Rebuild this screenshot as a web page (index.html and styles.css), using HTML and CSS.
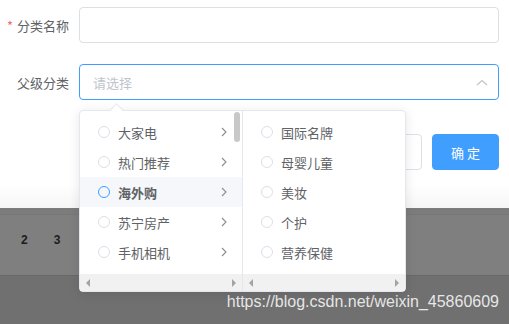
FILE: index.html
```html
<!DOCTYPE html>
<html lang="zh-CN">
<head>
    <meta charset="UTF-8">
    <title>添加分类</title>
    <link rel="stylesheet" href="styles.css">
</head>
<body>
    <div class="dialog">
        <div class="form">
            <div class="form-item">
                <label class="label required">分类名称</label>
                <div class="input"></div>
            </div>
            <div class="form-item">
                <label class="label">父级分类</label>
                <div class="input select is-focus">
                    <span class="placeholder">请选择</span>
                    <svg class="select-arrow" width="12" height="7" viewBox="0 0 12 7">
                        <polyline points="1,6 6,1.5 11,6" fill="none" stroke="#c0c4cc" stroke-width="1.2"/>
                    </svg>
                </div>
            </div>
        </div>
        <div class="footer">
            <button class="btn">取 消</button>
            <button class="btn btn-primary">确 定</button>
        </div>
    </div>

    <!-- 遮罩下面的页面 -->
    <div class="mask">
        <div class="pager">
            <span>2</span>
            <span>3</span>
        </div>
    </div>
    <div class="bottom">
        <span class="watermark">https://blog.csdn.net/weixin_45860609</span>
    </div>

    <!-- 级联选择下拉 -->
    <div class="cascader">
        <div class="cascader-arrow"></div>
        <div class="menu">
            <ul class="menu-list">
                <li class="node"><span class="radio"></span><span class="node-label">大家电</span><svg class="chevron" width="6" height="10" viewBox="0 0 6 10"><polyline points="1,1 5,5 1,9" fill="none" stroke="#8a8c92" stroke-width="1.1"/></svg></li>
                <li class="node"><span class="radio"></span><span class="node-label">热门推荐</span><svg class="chevron" width="6" height="10" viewBox="0 0 6 10"><polyline points="1,1 5,5 1,9" fill="none" stroke="#8a8c92" stroke-width="1.1"/></svg></li>
                <li class="node is-hover"><span class="radio"></span><span class="node-label">海外购</span><svg class="chevron" width="6" height="10" viewBox="0 0 6 10"><polyline points="1,1 5,5 1,9" fill="none" stroke="#8a8c92" stroke-width="1.1"/></svg></li>
                <li class="node"><span class="radio"></span><span class="node-label">苏宁房产</span><svg class="chevron" width="6" height="10" viewBox="0 0 6 10"><polyline points="1,1 5,5 1,9" fill="none" stroke="#8a8c92" stroke-width="1.1"/></svg></li>
                <li class="node"><span class="radio"></span><span class="node-label">手机相机</span><svg class="chevron" width="6" height="10" viewBox="0 0 6 10"><polyline points="1,1 5,5 1,9" fill="none" stroke="#8a8c92" stroke-width="1.1"/></svg></li>
            </ul>
            <div class="thumb"></div>
            <div class="hbar"><span class="tri tri-left"></span><span class="tri tri-right"></span></div>
        </div>
        <div class="menu">
            <ul class="menu-list">
                <li class="node"><span class="radio"></span><span class="node-label">国际名牌</span></li>
                <li class="node"><span class="radio"></span><span class="node-label">母婴儿童</span></li>
                <li class="node"><span class="radio"></span><span class="node-label">美妆</span></li>
                <li class="node"><span class="radio"></span><span class="node-label">个护</span></li>
                <li class="node"><span class="radio"></span><span class="node-label">营养保健</span></li>
            </ul>
            <div class="hbar"><span class="tri tri-left"></span><span class="tri tri-right"></span></div>
        </div>
    </div>
</body>
</html>
```

FILE: styles.css
```css
body {
    margin: 0;
    font-family: "Noto Sans CJK SC", "Liberation Sans", sans-serif;
    font-size: 13px;
    color: #606266;
    background-color: #707070;
    position: relative;
    height: 324px;
    overflow: hidden;
}

.dialog {
    background-color: #fff;
    height: 208px;
    box-sizing: border-box;
    padding: 7px 10px 0 0;
    background-image: linear-gradient(to bottom, #fff 185px, #f6f6f6 208px);
}

.form-item {
    display: flex;
    align-items: center;
    height: 36px;
    margin-bottom: 21px;
}

.label {
    width: 79px;
    box-sizing: border-box;
    padding-right: 10px;
    text-align: right;
    color: #606266;
}

.label.required::before {
    content: "*";
    color: #f56c6c;
    margin-right: 4px;
}

.input {
    flex: 1;
    height: 36px;
    box-sizing: border-box;
    border: 1px solid #dcdfe6;
    border-radius: 4px;
    background-color: #fff;
}

.select {
    display: flex;
    align-items: center;
    justify-content: space-between;
    padding: 0 10px 0 13px;
}

.select.is-focus {
    border-color: #409eff;
}

.placeholder {
    color: #c0c4cc;
}

.footer {
    display: flex;
    justify-content: flex-end;
    gap: 10px;
    margin-top: 34px;
}

.btn {
    width: 67px;
    height: 36px;
    border: 1px solid #dcdfe6;
    border-radius: 4px;
    background-color: #fff;
    color: #606266;
    font-family: inherit;
    font-size: 13px;
}

.btn-primary {
    background-color: #409eff;
    border-color: #409eff;
    color: #fff;
}

.mask {
    height: 68px;
    box-sizing: border-box;
    background-color: #7f7f7f;
    border-top: 6px solid #7c7c7c;
    border-bottom: 1px solid #696969;
    box-shadow: inset 0 1px 0 #777;
}

.pager {
    display: flex;
    gap: 26px;
    padding: 19px 0 0 21px;
    font-family: "Liberation Sans", sans-serif;
    font-size: 12px;
    font-weight: bold;
    color: #1c1c1c;
}

.bottom {
    height: 48px;
    box-sizing: border-box;
    padding: 16px 10px 0 0;
    text-align: right;
}

.watermark {
    font-family: "Liberation Sans", sans-serif;
    font-size: 16px;
    color: rgba(255, 255, 255, 0.85);
}

/* 下拉面板 */
.cascader {
    position: absolute;
    left: 79px;
    top: 110px;
    display: flex;
    background-color: #fff;
    border: 1px solid #e4e7ed;
    border-radius: 4px;
    box-shadow: 0 2px 12px rgba(0, 0, 0, 0.1);
    overflow: visible;
}

.cascader-arrow {
    position: absolute;
    left: 32px;
    top: -6px;
    width: 8px;
    height: 8px;
    background-color: #fff;
    border-top: 1px solid #e4e7ed;
    border-left: 1px solid #e4e7ed;
    transform: rotate(45deg);
}

.menu {
    position: relative;
    width: 162px;
    display: flex;
    flex-direction: column;
}

.menu + .menu {
    border-left: 1px solid #e4e7ed;
}

.menu-list {
    list-style: none;
    margin: 0;
    padding: 6px 0 7px;
}

.node {
    display: flex;
    align-items: center;
    height: 30px;
    padding: 0 15px 0 18px;
}

.node.is-hover {
    background-color: #f5f7fa;
}

.node.is-hover .node-label {
    font-weight: bold;
}

.node.is-hover .radio {
    border-color: #409eff;
}

.radio {
    width: 12px;
    height: 12px;
    box-sizing: border-box;
    border: 1px solid #dcdfe6;
    border-radius: 50%;
    margin-right: 8px;
}

.node-label {
    flex: 1;
}

.thumb {
    position: absolute;
    right: 2px;
    top: 1px;
    width: 6px;
    height: 30px;
    border-radius: 3px;
    background-color: #c8c8c8;
}

.hbar {
    height: 17px;
    background-color: #f1f1f1;
    display: flex;
    align-items: center;
    justify-content: space-between;
    padding: 0 6px;
}

.tri {
    width: 0;
    height: 0;
    border-top: 4px solid transparent;
    border-bottom: 4px solid transparent;
}

.tri-left {
    border-right: 4px solid #a3a3a3;
}

.tri-right {
    border-left: 4px solid #a3a3a3;
}
```
